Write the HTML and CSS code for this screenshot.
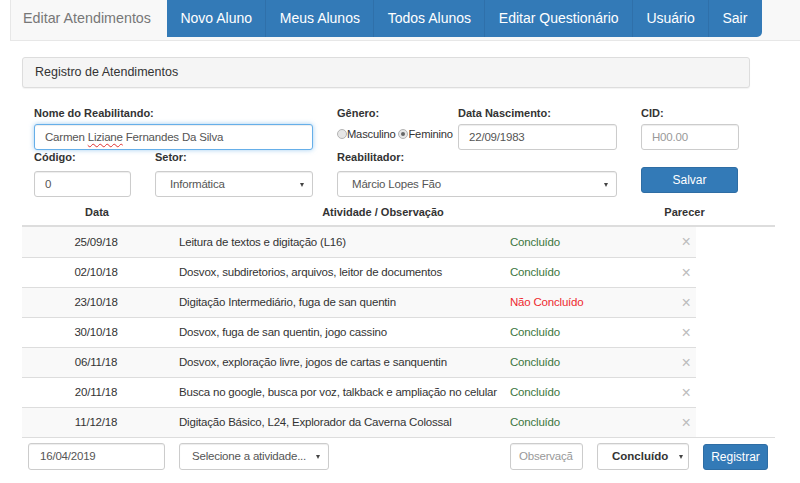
FILE: index.html
```html
<!DOCTYPE html>
<html lang="pt-BR">
<head>
<meta charset="utf-8">
<title>Registro de Atendimentos</title>
<link rel="stylesheet" href="styles.css">
</head>
<body>
<nav class="navbar">
  <div class="brand">Editar Atendimentos</div>
  <ul class="nav">
    <li>Novo Aluno</li>
    <li>Meus Alunos</li>
    <li>Todos Alunos</li>
    <li>Editar Questionário</li>
    <li>Usuário</li>
    <li>Sair</li>
  </ul>
</nav>

<main class="content">
  <div class="panel">Registro de Atendimentos</div>

  <form class="form-grid">
    <div class="cell span2">
      <label class="lbl">Nome do Reabilitando:</label>
      <div class="fc focus">Carmen <span class="spell">Liziane</span> Fernandes Da Silva</div>
    </div>
    <div class="cell pair">
      <div class="genero">
        <label class="lbl">Gênero:</label>
        <div class="radios">
          <span class="radio"></span>Masculino <span class="radio checked"></span>Feminino
        </div>
      </div>
      <div class="nasc">
        <label class="lbl">Data Nascimento:</label>
        <div class="fc">22/09/1983</div>
      </div>
    </div>
    <div class="cell">
      <label class="lbl">CID:</label>
      <div class="fc ph">H00.00</div>
    </div>

    <div class="cell row2">
      <label class="lbl">Código:</label>
      <div class="fc">0</div>
    </div>
    <div class="cell row2">
      <label class="lbl">Setor:</label>
      <div class="fc sel sel-setor">Informática<span class="caret"></span></div>
    </div>
    <div class="cell row2">
      <label class="lbl">Reabilitador:</label>
      <div class="fc sel">Márcio Lopes Fão<span class="caret"></span></div>
    </div>
    <div class="cell row2 btn-cell">
      <button type="button" class="btn">Salvar</button>
    </div>
  </form>

  <div class="thead">
    <div class="th">Data</div>
    <div class="th">Atividade / Observação</div>
    <div class="th">Parecer</div>
  </div>

  <div class="tbody">
    <div class="tr"><div class="td c">25/09/18</div><div class="td">Leitura de textos e digitação (L16)</div><div class="td ok">Concluído</div><div class="td x">×</div></div>
    <div class="tr"><div class="td c">02/10/18</div><div class="td">Dosvox, subdiretorios, arquivos, leitor de documentos</div><div class="td ok">Concluído</div><div class="td x">×</div></div>
    <div class="tr"><div class="td c">23/10/18</div><div class="td">Digitação Intermediário, fuga de san quentin</div><div class="td bad">Não Concluído</div><div class="td x">×</div></div>
    <div class="tr"><div class="td c">30/10/18</div><div class="td">Dosvox, fuga de san quentin, jogo cassino</div><div class="td ok">Concluído</div><div class="td x">×</div></div>
    <div class="tr"><div class="td c">06/11/18</div><div class="td">Dosvox, exploração livre, jogos de cartas e sanquentin</div><div class="td ok">Concluído</div><div class="td x">×</div></div>
    <div class="tr"><div class="td c">20/11/18</div><div class="td">Busca no google, busca por voz, talkback e ampliação no celular</div><div class="td ok">Concluído</div><div class="td x">×</div></div>
    <div class="tr"><div class="td c">11/12/18</div><div class="td">Digitação Básico, L24, Explorador da Caverna Colossal</div><div class="td ok">Concluído</div><div class="td x">×</div></div>
  </div>

  <div class="tfoot">
    <div class="fcell"><div class="fc f-date">16/04/2019</div></div>
    <div class="fcell pl"><div class="fc sel f-ativ">Selecione a atividade...<span class="caret"></span></div></div>
    <div class="fcell actions">
      <div class="fc ph f-obs">Observaçã</div>
      <div class="fc sel f-status">Concluído<span class="caret"></span></div>
      <button type="button" class="btn f-btn">Registrar</button>
    </div>
  </div>
</main>
</body>
</html>
```

FILE: styles.css
```css
* { box-sizing: border-box; }

body {
  margin: 0;
  font-family: "Liberation Sans", Arial, sans-serif;
  font-size: 11.5px;
  letter-spacing: -0.2px;
  color: #333;
  background: #fff;
}

/* navbar */
.navbar {
  margin-left: 10px;
  height: 41px;
  background: #f8f8f8;
  border-left: 1px solid #e7e7e7;
  border-bottom: 1px solid #e7e7e7;
  display: flex;
  align-items: flex-start;
  letter-spacing: 0;
}
.brand {
  width: 156px;
  height: 37px;
  padding-left: 12px;
  line-height: 37px;
  font-size: 14.3px;
  color: #777;
}
.nav {
  list-style: none;
  margin: 0;
  padding: 0;
  display: flex;
  height: 37px;
  background: #337ab7;
  border-bottom-right-radius: 5px;
}
.nav li {
  line-height: 36px;
  padding: 0 13.4px;
  color: #fff;
  font-size: 14px;
  border-right: 1px solid #2f70aa;
}
.nav li:last-child { border-right: 0; padding-right: 14.5px; }

/* content */
.content {
  padding-left: 22px;
  width: 775px;
}
.panel {
  margin-top: 16px;
  width: 728px;
  height: 31px;
  padding-left: 12px;
  line-height: 29px;
  font-size: 12.5px;
  letter-spacing: 0;
  color: #333;
  background: #f5f5f5;
  border: 1px solid #ddd;
  border-radius: 3px;
  box-shadow: 0 1px 1px rgba(0,0,0,.05);
}

/* form */
.form-grid {
  margin: 18px 0 0 12px;
  display: grid;
  grid-template-columns: 97px 158px 280px 98px;
  column-gap: 24px;
}
.span2 { grid-column: span 2; }
.lbl {
  display: block;
  font-weight: bold;
  font-size: 11px;
  letter-spacing: 0;
  line-height: 14px;
  margin-bottom: 4px;
  color: #333;
}
.row2 .lbl { margin-bottom: 7px; }
.fc {
  position: relative;
  height: 26px;
  line-height: 24px;
  padding: 0 10px;
  border: 1px solid #ccc;
  border-radius: 3px;
  background: #fff;
  color: #555;
  font-size: 11.5px;
  white-space: nowrap;
  overflow: hidden;
  box-shadow: inset 0 1px 1px rgba(0,0,0,.075);
}
.fc.focus {
  border-color: #66afe9;
  box-shadow: inset 0 1px 1px rgba(0,0,0,.075), 0 0 5px rgba(102,175,233,.6);
}
.spell {
  text-decoration: underline wavy #e03030;
  text-decoration-thickness: 1px;
  text-underline-offset: 2px;
}
.ph { color: #999; }
.sel { padding-left: 14px; }
.caret {
  position: absolute;
  right: 8px;
  top: 11px;
  width: 0;
  height: 0;
  border-left: 2.5px solid transparent;
  border-right: 2.5px solid transparent;
  border-top: 4px solid #444;
}
.pair { display: flex; }
.genero { width: 121px; }
.nasc { width: 159px; }
.radios {
  height: 26px;
  line-height: 20px;
  font-size: 11.2px;
  color: #333;
  white-space: nowrap;
}
.radio {
  display: inline-block;
  width: 10px;
  height: 10px;
  border-radius: 50%;
  border: 1px solid #b4b4b4;
  background: #e6e6e6;
  vertical-align: -1px;
  margin-right: 0;
  position: relative;
}
.radio.checked::after {
  content: "";
  position: absolute;
  left: 2px;
  top: 2px;
  width: 4px;
  height: 4px;
  border-radius: 50%;
  background: #666;
}
.btn-cell { padding-top: 17px; }
.btn {
  display: block;
  height: 26px;
  width: 97px;
  padding: 0;
  border: 1px solid #2e6da4;
  border-radius: 3px;
  background: #337ab7;
  color: #fff;
  font-family: inherit;
  font-size: 12px;
}

/* table */
.thead {
  margin-top: 3px;
  display: grid;
  grid-template-columns: 150px 422px 181px;
  height: 27px;
  border-bottom: 2px solid #ddd;
}
.th {
  text-align: center;
  font-weight: bold;
  font-size: 11px;
  letter-spacing: 0;
  line-height: 24px;
}
.tbody { width: 674px; }
.tr {
  display: grid;
  grid-template-columns: 148px 332px 170px 24px;
  height: 30px;
  border-top: 1px solid #ddd;
}
.tr:first-child { border-top: 0; }
.tr:nth-child(odd) { background: #f9f9f9; }
.td {
  line-height: 29px;
  font-size: 11.5px;
  color: #333;
  padding-left: 9px;
  white-space: nowrap;
}
.tr:first-child .td { line-height: 30px; }
.td.c { text-align: center; padding-left: 0; color: #333; }
.td.ok { color: #3c763d; padding-left: 8px; }
.td.bad { color: #ee2a2f; padding-left: 8px; }
.td.x {
  padding-left: 4px;
  text-align: center;
  color: #bdbdbd;
  font-size: 16px;
}

/* footer row */
.tfoot {
  display: grid;
  grid-template-columns: 148px 332px auto;
  border-top: 1px solid #ddd;
  padding-top: 5px;
}
.fcell { display: flex; }
.f-date { margin-left: 6px; width: 137px; padding-left: 11px; height: 27px; line-height: 25px; }
.pl { padding-left: 9px; }
.f-ativ { width: 150px; padding-left: 12px; height: 27px; line-height: 25px; }
.actions { gap: 14px; padding-left: 8px; }
.f-obs { width: 73px; padding-left: 8px; height: 27px; line-height: 25px; }
.f-status { width: 92px; height: 27px; line-height: 25px; font-weight: bold; color: #333; letter-spacing: 0; }
.f-status .caret { right: 5px; }
.f-btn { width: 65px; height: 26px; margin-top: 1px; }
```
